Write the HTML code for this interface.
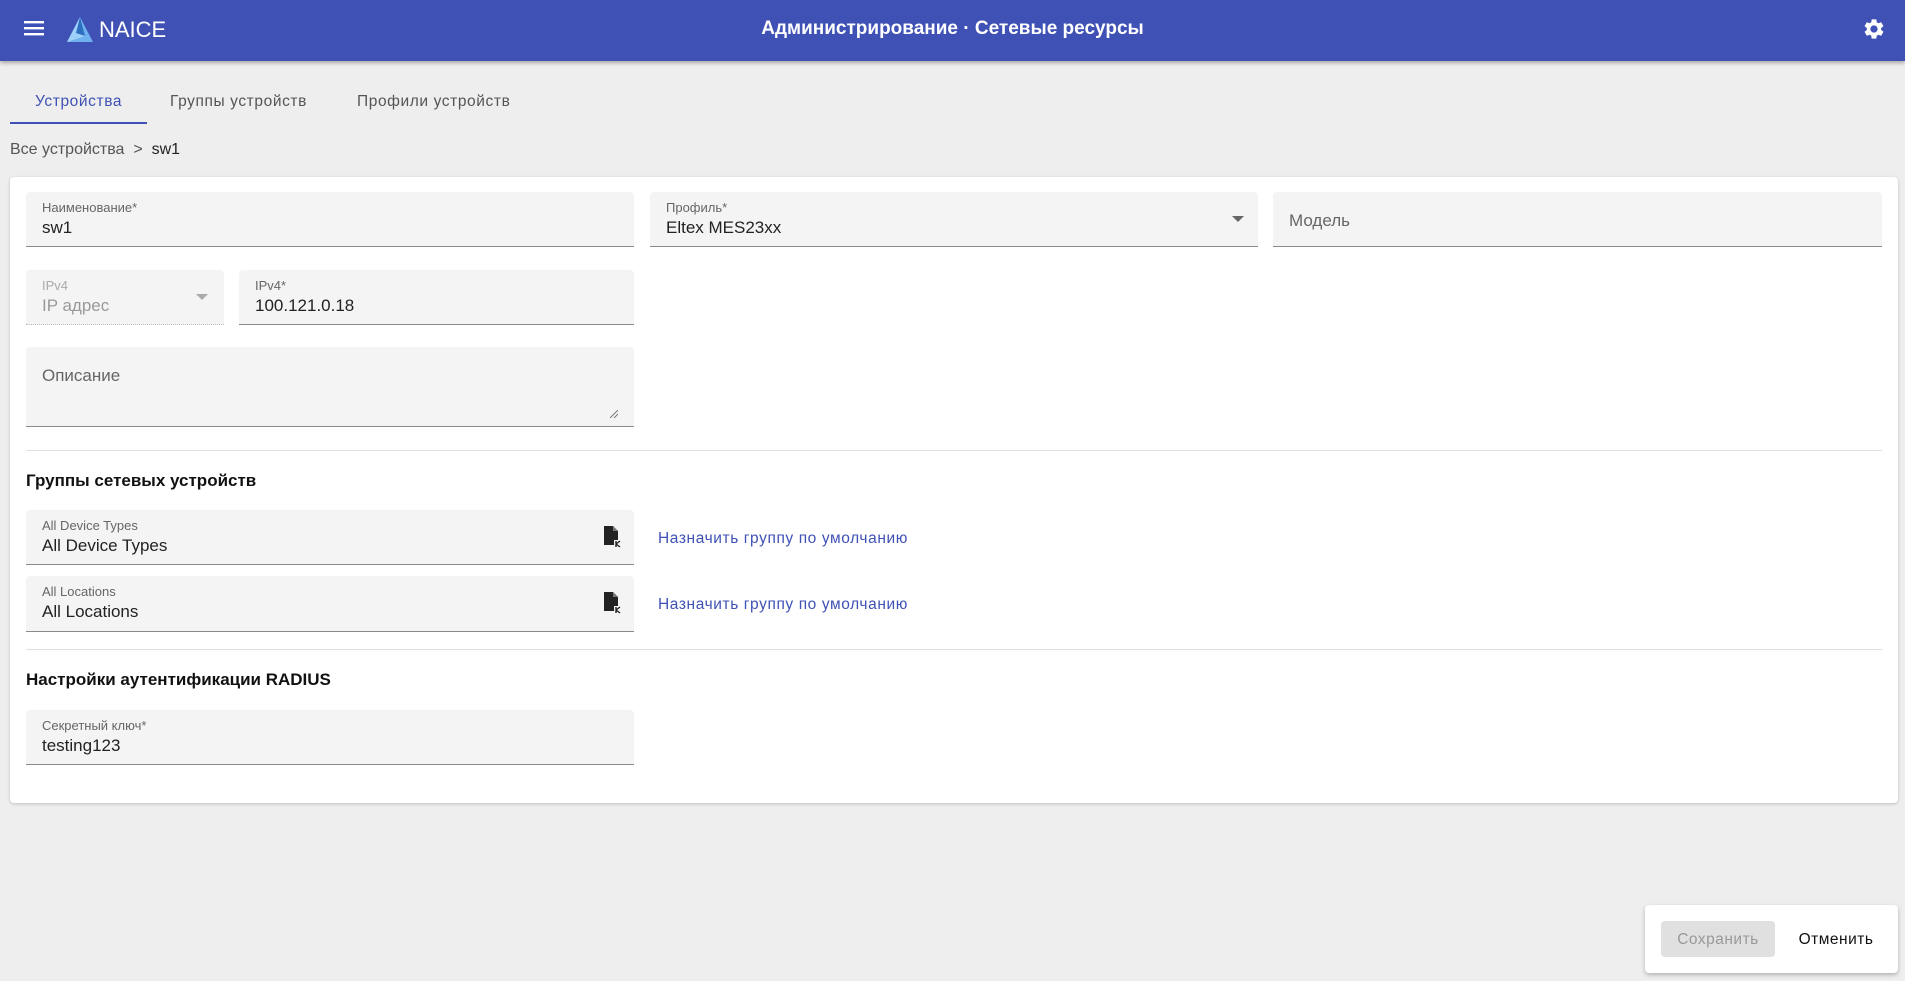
<!DOCTYPE html>
<html><head><meta charset="utf-8"><style>
*{box-sizing:border-box;margin:0;padding:0}
body{width:1905px;height:981px;background:#eeeeee;font-family:"Liberation Sans","Noto Sans CJK SC",sans-serif;position:relative;overflow:hidden;color:#222}
.hdr{position:absolute;left:0;top:0;width:1905px;height:61px;background:#3f51b5;box-shadow:0 2px 4px rgba(0,0,0,.3);color:#fff}
.abs{position:absolute}
.tab{position:absolute;top:93px;font-size:15.5px;letter-spacing:.6px;color:#555}
.card{position:absolute;left:10px;top:177px;width:1888px;height:626px;background:#fff;border-radius:4px;box-shadow:0 1px 3px rgba(0,0,0,.2)}
.f{position:absolute;background:#f4f4f4;border-radius:4px 4px 0 0;border-bottom:1px solid #8a8a8a}
.f .l{position:absolute;left:16px;top:8px;font-size:13px;color:#666}
.f .v{position:absolute;left:16px;top:26px;font-size:17px;color:#222}
.f .p{position:absolute;left:16px;top:19px;font-size:17px;color:#666}
.h{position:absolute;left:26px;font-size:17px;font-weight:bold;color:#111}
.div{position:absolute;left:26px;width:1856px;height:1px;background:#e0e0e0}
.lnk{position:absolute;left:658px;font-size:15.5px;letter-spacing:.6px;color:#3f51b5}
.ic{position:absolute;right:12px;top:16px}
</style></head><body>
<div class="hdr">
 <svg class="abs" style="left:24px;top:20px" width="20" height="16" viewBox="0 0 20 16"><rect y="1" width="20" height="2.4" fill="#fff"/><rect y="7" width="20" height="2.4" fill="#fff"/><rect y="13" width="20" height="2.4" fill="#fff"/></svg>
 <svg class="abs" style="left:66px;top:16px" width="28" height="27" viewBox="0 0 28 27"><polygon points="14,1 27,26 1,26" fill="#6fb0ee"/><polygon points="14,1 19,20 1,26" fill="#9fd0fa"/><polygon points="10,17 19,20 14,1" fill="#2f6fc0"/></svg>
 <div class="abs" style="left:99px;top:17px;font-size:22px;font-weight:500">NAICE</div>
 <div class="abs" style="left:0;width:1905px;top:18px;text-align:center;font-size:19px;font-weight:bold">Администрирование · Сетевые ресурсы</div>
 <svg class="abs" style="left:1862px;top:17px" width="24" height="24" viewBox="0 0 24 24"><path fill="#fff" d="M19.14 12.94c.04-.3.06-.61.06-.94 0-.32-.02-.64-.07-.94l2.030-1.58a.49.49 0 0 0 .12-.61l-1.92-3.32a.49.49 0 0 0-.59-.22l-2.39.96c-.5-.38-1.03-.7-1.62-.94l-.36-2.54a.48.48 0 0 0-.48-.41h-3.84c-.24 0-.43.17-.47.41l-.36 2.54c-.59.24-1.130.57-1.62.94l-2.39-.96c-.22-.08-.47 0-.59.22L2.74 8.87c-.12.21-.08.47.12.61l2.030 1.58c-.05.3-.09.63-.09.94s.02.64.07.94l-2.030 1.58a.49.49 0 0 0-.12.61l1.92 3.32c.12.22.37.29.59.22l2.39-.96c.5.38 1.030.7 1.62.94l.36 2.54c.05.24.24.41.48.41h3.84c.24 0 .44-.17.47-.41l.36-2.54c.59-.24 1.13-.56 1.62-.94l2.39.96c.22.08.47 0 .59-.22l1.92-3.32c.12-.22.07-.47-.12-.61l-2.010-1.58zM12 15.6c-1.98 0-3.6-1.62-3.6-3.6s1.62-3.6 3.6-3.6 3.6 1.62 3.6 3.6-1.62 3.6-3.6 3.6z"/></svg>
</div>
<div class="tab" style="left:35px;color:#3f51b5">Устройства</div>
<div class="abs" style="left:10px;top:122px;width:137px;height:2px;background:#3f51b5"></div>
<div class="tab" style="left:170px">Группы устройств</div>
<div class="tab" style="left:357px">Профили устройств</div>
<div class="abs" style="left:10px;top:141px;font-size:16px;color:#555">Все устройства &nbsp;&gt;&nbsp; <span style="color:#222">sw1</span></div>
<div class="card"></div>
<div class="f" style="left:26px;top:192px;width:608px;height:55px"><div class="l">Наименование*</div><div class="v">sw1</div></div>
<div class="f" style="left:650px;top:192px;width:608px;height:55px"><div class="l">Профиль*</div><div class="v">Eltex MES23xx</div><svg class="abs" style="right:14px;top:24px" width="12" height="6"><polygon points="0,0 12,0 6,6" fill="#666"/></svg></div>
<div class="f" style="left:1273px;top:192px;width:609px;height:55px"><div class="p">Модель</div></div>
<div class="f" style="left:26px;top:270px;width:198px;height:55px;border-bottom:1px dotted #bbb"><div class="l" style="color:#aaa">IPv4</div><div class="v" style="color:#999">IP адрес</div><svg class="abs" style="right:16px;top:24px" width="12" height="6"><polygon points="0,0 12,0 6,6" fill="#aaa"/></svg></div>
<div class="f" style="left:239px;top:270px;width:395px;height:55px"><div class="l">IPv4*</div><div class="v">100.121.0.18</div></div>
<div class="f" style="left:26px;top:347px;width:608px;height:80px"><div class="p" style="top:19px">Описание</div><svg class="abs" style="right:16px;bottom:8px" width="8" height="8"><path d="M0 8L8 0M4 8L8 4" stroke="#777" stroke-width="1"/></svg></div>
<div class="div" style="top:450px"></div>
<div class="h" style="top:471px">Группы сетевых устройств</div>
<div class="f" style="left:26px;top:510px;width:608px;height:55px"><div class="l">All Device Types</div><div class="v">All Device Types</div><svg class="ic" width="20" height="22" viewBox="0 0 20 22"><path d="M2 0h9l5 5v14H2z" fill="#222"/><path d="M11 0v5h5" fill="#777"/><rect x="12" y="14" width="8" height="8" fill="#f4f4f4"/><path d="M14 15v6M14 18l4-3M14 18l4 3" stroke="#222" stroke-width="1.4"/></svg></div>
<div class="lnk" style="top:530px">Назначить группу по умолчанию</div>
<div class="f" style="left:26px;top:576px;width:608px;height:56px"><div class="l">All Locations</div><div class="v">All Locations</div><svg class="ic" width="20" height="22" viewBox="0 0 20 22"><path d="M2 0h9l5 5v14H2z" fill="#222"/><path d="M11 0v5h5" fill="#777"/><rect x="12" y="14" width="8" height="8" fill="#f4f4f4"/><path d="M14 15v6M14 18l4-3M14 18l4 3" stroke="#222" stroke-width="1.4"/></svg></div>
<div class="lnk" style="top:596px">Назначить группу по умолчанию</div>
<div class="div" style="top:649px"></div>
<div class="h" style="top:670px">Настройки аутентификации RADIUS</div>
<div class="f" style="left:26px;top:710px;width:608px;height:55px"><div class="l">Секретный ключ*</div><div class="v">testing123</div></div>
<div class="abs" style="left:1645px;top:905px;width:253px;height:68px;background:#fff;border-radius:4px;box-shadow:0 2px 4px rgba(0,0,0,.25)"></div>
<div class="abs" style="left:1661px;top:921px;width:114px;height:36px;background:#e0e0e0;border-radius:4px;text-align:center;line-height:37px;font-size:15.5px;letter-spacing:.5px;color:#999">Сохранить</div>
<div class="abs" style="left:1790px;top:921px;width:92px;height:36px;text-align:center;line-height:37px;font-size:15.5px;letter-spacing:.5px;color:#111;font-weight:500">Отменить</div>
</body></html>
